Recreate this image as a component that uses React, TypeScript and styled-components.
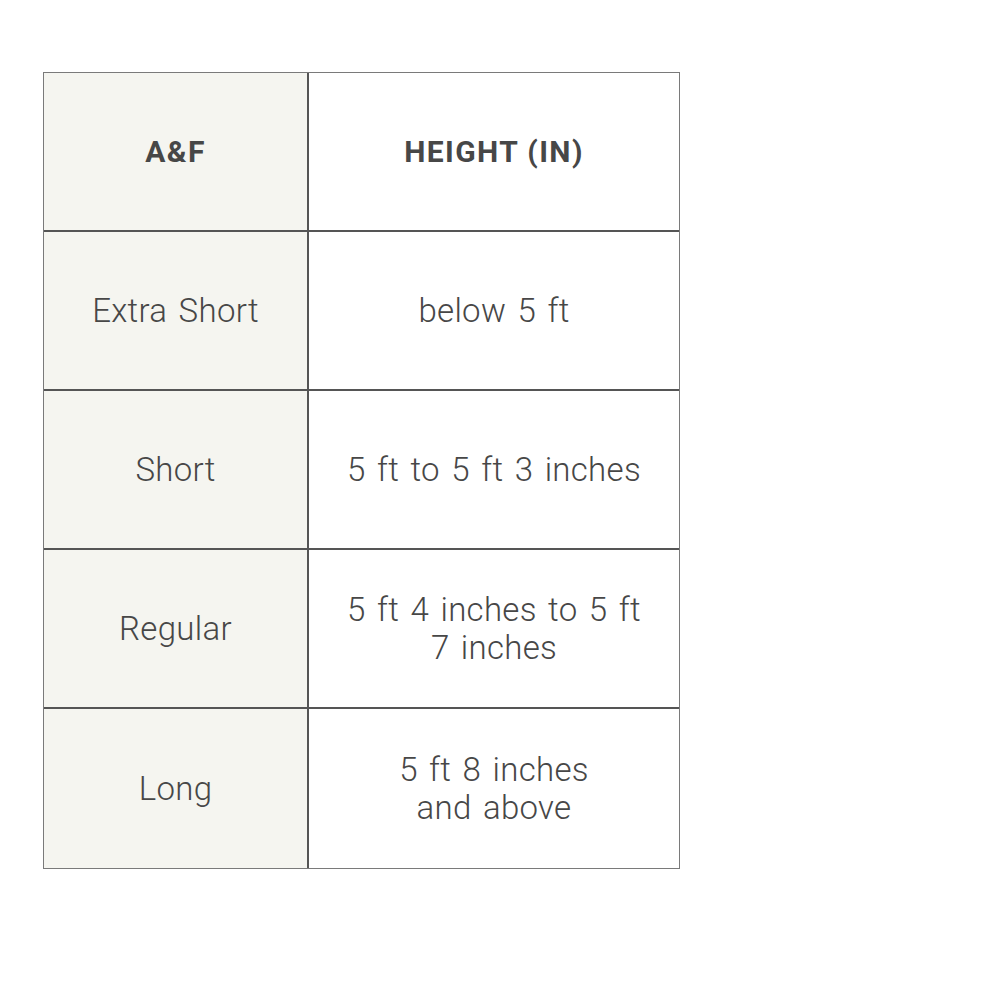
import styled, { createGlobalStyle } from "styled-components";

const GlobalStyle = createGlobalStyle`
  body {
    margin: 0;
    background: #ffffff;
    font-family: Roboto, "Liberation Sans", sans-serif;
  }
`;

const rows = [
  { size: "Extra Short", height: ["below 5 ft"] },
  { size: "Short", height: ["5 ft to 5 ft 3 inches"] },
  { size: "Regular", height: ["5 ft 4 inches to 5 ft", "7 inches"] },
  { size: "Long", height: ["5 ft 8 inches", "and above"] },
];

const App = () => {
  return (
    <>
      <GlobalStyle />
      <Page>
        <SizeTable>
          <Cell $label $header>
            A&amp;F
          </Cell>
          <Cell $header>HEIGHT (IN)</Cell>
          {rows.map((row, i) => {
            const last = i === rows.length - 1;
            return [
              <Cell key={row.size + "-l"} $label $last={last}>
                {row.size}
              </Cell>,
              <Cell key={row.size + "-r"} $last={last}>
                <span>
                  {row.height.map((line, j) => (
                    <Line key={j}>{line}</Line>
                  ))}
                </span>
              </Cell>,
            ];
          })}
        </SizeTable>
      </Page>
    </>
  );
};

const Page = styled.div`
  padding: 72px 0 0 43px;
`;

const SizeTable = styled.div`
  display: grid;
  grid-template-columns: 265px 370px;
  grid-auto-rows: 159px;
  width: 637px;
  box-sizing: border-box;
  border: 1px solid #7a7a7a;
`;

const Cell = styled.div<{ $label?: boolean; $header?: boolean; $last?: boolean }>`
  display: flex;
  align-items: center;
  justify-content: center;
  text-align: center;
  box-sizing: border-box;
  background: ${(p) => (p.$label ? "#f5f5f0" : "#ffffff")};
  border-right: ${(p) => (p.$label ? "2px solid #555555" : "none")};
  border-bottom: ${(p) => (p.$last ? "none" : "2px solid #555555")};
  color: #474747;
  font-size: ${(p) => (p.$header ? "30px" : "33px")};
  font-weight: ${(p) => (p.$header ? 700 : 300)};
  letter-spacing: ${(p) => (p.$header ? "1.4px" : "0.3px")};
  word-spacing: ${(p) => (p.$header ? "0" : "3px")};
  line-height: 38px;
`;

const Line = styled.span`
  display: block;
`;

export default App;
